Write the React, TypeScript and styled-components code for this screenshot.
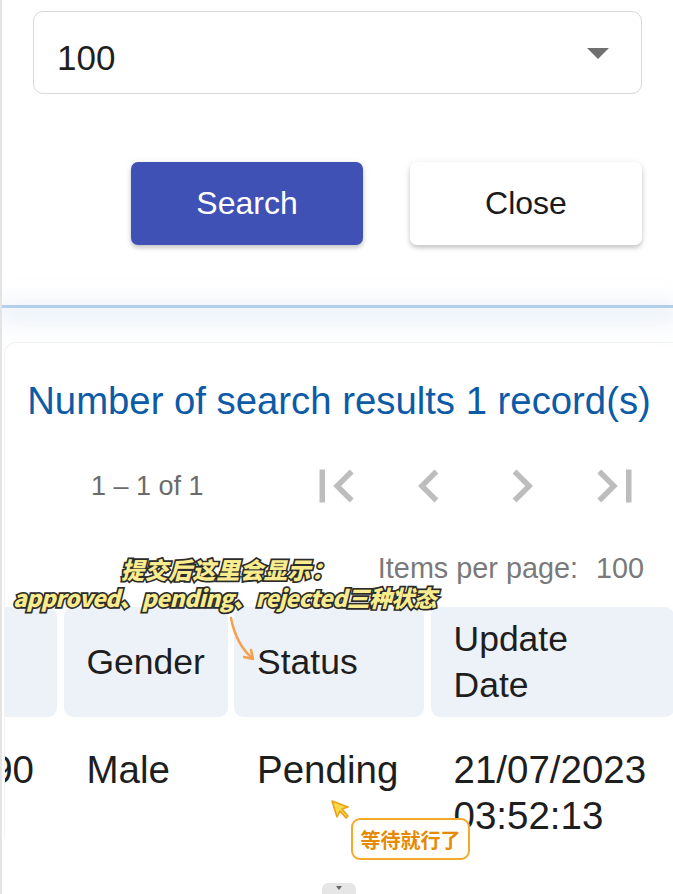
import React, { useLayoutEffect, useRef } from "react";
import styled, { createGlobalStyle } from "styled-components";

const GlobalStyle = createGlobalStyle`
  html, body { margin: 0; padding: 0; background: #ffffff; }
  body { font-family: "Liberation Sans", Arial, sans-serif; overflow: hidden; }
  * { box-sizing: border-box; }
`;

const Page = styled.div`
  position: relative;
  width: 673px;
  height: 894px;
  overflow: hidden;
  border-left: 2px solid #e4e4e4;
  background: #ffffff;
`;

const FormArea = styled.div`
  padding: 11px 31px 0 31px;
`;

const SelectBox = styled.div`
  height: 83px;
  border: 1.5px solid #d8d8d8;
  border-radius: 10px;
  display: flex;
  align-items: center;
  justify-content: space-between;
  padding: 10px 32px 0 23px;
  color: #1f1f1f;
  font-size: 35px;
`;

const Caret = styled.span`
  width: 0;
  height: 0;
  margin-top: -8px;
  border-left: 11px solid transparent;
  border-right: 11px solid transparent;
  border-top: 11px solid #707070;
`;

const ButtonRow = styled.div`
  display: flex;
  justify-content: flex-end;
  gap: 47px;
  margin-top: 68px;
`;

const Button = styled.button<{ $primary?: boolean }>`
  width: 232px;
  height: 83px;
  border: none;
  border-radius: 7px;
  font-family: inherit;
  font-size: 32px;
  background: ${(p) => (p.$primary ? "#3f51b5" : "#ffffff")};
  color: ${(p) => (p.$primary ? "#ffffff" : "#1a1a1a")};
  box-shadow: 0 3px 4px rgba(0, 0, 0, 0.18), 0 1px 8px rgba(0, 0, 0, 0.08);
`;

const Divider = styled.div`
  margin-top: 60px;
  height: 3px;
  background: #b3cdea;
  box-shadow: 0 6px 22px 6px rgba(200, 219, 242, 0.5);
`;

const Card = styled.div`
  margin-top: 34px;
  margin-left: 2px;
  border-top: 1px solid #f0f2f5;
  border-left: 1px solid #f0f2f5;
  border-top-left-radius: 12px;
  padding-top: 36px;
`;

const Title = styled.div`
  text-align: center;
  color: #0d5ba6;
  font-size: 38.3px;
  line-height: 44px;
  white-space: nowrap;
`;

const PagerRow = styled.div`
  display: flex;
  align-items: center;
  height: 66px;
  margin-top: 30px;
  padding-left: 86px;
`;

const RangeLabel = styled.span`
  color: #6b6b6b;
  font-size: 27px;
  width: 212px;
`;

const PagerButtons = styled.div`
  display: flex;
  gap: 27px;
`;

const PagerIcon = styled.svg`
  width: 66px;
  height: 66px;
  fill: #bdbdbd;
  display: block;
`;

const ItemsRow = styled.div`
  display: flex;
  justify-content: flex-end;
  gap: 18px;
  margin-top: 32px;
  padding-right: 29px;
  font-size: 28.8px;
  line-height: 34px;
  color: #7a7a7a;
`;

const TableScroll = styled.div`
  margin-top: 22px;
  overflow: hidden;
  width: 100%;
`;

const Grid = styled.div`
  display: grid;
  grid-template-columns: 190px 164px 190px 243px;
  column-gap: 6.5px;
  width: max-content;
`;

const HeadCell = styled.div`
  height: 110px;
  background: #edf2f8;
  border-radius: 9px;
  display: flex;
  align-items: center;
  padding: 0 23px;
  font-size: 35.5px;
  line-height: 46px;
  color: #1e1e1e;
`;

const BodyCell = styled.div<{ $alignRight?: boolean }>`
  padding: 30px 23px 0 23px;
  text-align: ${(p) => (p.$alignRight ? "right" : "left")};
  font-size: 38.5px;
  line-height: 46px;
  color: #1e1e1e;
`;

const Annotation = styled.div<{ $spacing: number; $size: number }>`
  position: absolute;
  font-family: "Noto Sans CJK SC", "Liberation Sans", sans-serif;
  font-weight: 900;
  font-style: italic;
  font-size: ${(p) => p.$size}px;
  line-height: 26px;
  color: #f8ec8e;
  -webkit-text-stroke: 3.4px #2b2b2b;
  paint-order: stroke fill;
  white-space: nowrap;
  letter-spacing: ${(p) => p.$spacing}px;
`;

const ArrowSvg = styled.svg`
  position: absolute;
  left: 220px;
  top: 612px;
  width: 40px;
  height: 54px;
  overflow: visible;
`;

const CursorSvg = styled.svg`
  position: absolute;
  left: 327px;
  top: 798px;
  width: 24px;
  height: 24px;
`;

const Tip = styled.div`
  position: absolute;
  left: 349px;
  top: 818px;
  width: 119px;
  height: 42px;
  border: 2.5px solid #f4a92a;
  border-radius: 9px;
  background: #fffefa;
  display: flex;
  align-items: center;
  justify-content: center;
  font-family: "Noto Sans CJK SC", sans-serif;
  font-weight: 700;
  font-size: 20px;
  color: #e48a06;
`;

const BottomTab = styled.div`
  position: absolute;
  left: 320px;
  bottom: 0;
  width: 34px;
  height: 11px;
  background: #e6e6e6;
  border-radius: 6px 6px 0 0;
  display: flex;
  justify-content: center;
  padding-top: 3px;
`;

const TinyTriangle = styled.span`
  width: 0;
  height: 0;
  border-left: 3.5px solid transparent;
  border-right: 3.5px solid transparent;
  border-top: 4px solid #666;
`;

const icons = {
  first: "M18.41 16.59L13.82 12l4.59-4.59L17 6l-6 6 6 6zM6 6h2v12H6z",
  prev: "M15.41 7.41L14 6l-6 6 6 6 1.41-1.41L10.83 12z",
  next: "M10 6L8.59 7.41 13.17 12l-4.58 4.59L10 18l6-6z",
  last: "M5.59 7.41L10.18 12l-4.59 4.59L7 18l6-6-6-6zM16 6h2v12h-2z",
};

export default function App() {
  const scrollRef = useRef<HTMLDivElement>(null);
  useLayoutEffect(() => {
    if (scrollRef.current) scrollRef.current.scrollLeft = 138;
  }, []);

  return (
    <>
      <GlobalStyle />
      <Page>
        <FormArea>
          <SelectBox>
            <span>100</span>
            <Caret />
          </SelectBox>
          <ButtonRow>
            <Button $primary>Search</Button>
            <Button>Close</Button>
          </ButtonRow>
        </FormArea>
        <Divider />
        <Card>
          <Title>Number of search results 1 record(s)</Title>
          <PagerRow>
            <RangeLabel>1 – 1 of 1</RangeLabel>
            <PagerButtons>
              {(["first", "prev", "next", "last"] as const).map((k) => (
                <PagerIcon key={k} viewBox="0 0 24 24">
                  <path d={icons[k]} />
                </PagerIcon>
              ))}
            </PagerButtons>
          </PagerRow>
          <ItemsRow>
            <span>Items per page:</span>
            <span>100</span>
          </ItemsRow>
          <TableScroll ref={scrollRef}>
            <Grid>
              <HeadCell>Phone</HeadCell>
              <HeadCell>Gender</HeadCell>
              <HeadCell>Status</HeadCell>
              <HeadCell>Update Date</HeadCell>
              <BodyCell $alignRight>7890</BodyCell>
              <BodyCell>Male</BodyCell>
              <BodyCell>Pending</BodyCell>
              <BodyCell>21/07/2023 03:52:13</BodyCell>
            </Grid>
          </TableScroll>
        </Card>

        <Annotation $size={23.2} $spacing={0.6} style={{ left: 119, top: 556 }}>
          提交后这里会显示：
        </Annotation>
        <Annotation $size={22.8} $spacing={-0.5} style={{ left: 11, top: 585 }}>
          approved、pending、rejected三种状态
        </Annotation>
        <ArrowSvg viewBox="0 0 40 54">
          <path d="M9 6 Q 14 32 30 46" stroke="#f5a04e" strokeWidth="2.5" fill="none" strokeLinecap="round" />
          <path d="M22 45 L31 47 L29 38" stroke="#f5a04e" strokeWidth="2.5" fill="none" strokeLinecap="round" strokeLinejoin="round" />
        </ArrowSvg>
        <CursorSvg viewBox="0 0 24 24">
          <path d="M3 3 L19 9 L13 11 L19 18 L17 20 L11 13 L8 19 Z" fill="#fbd84a" stroke="#eaa21a" strokeWidth="1.6" strokeLinejoin="round" />
        </CursorSvg>
        <Tip>等待就行了</Tip>
        <BottomTab>
          <TinyTriangle />
        </BottomTab>
      </Page>
    </>
  );
}
